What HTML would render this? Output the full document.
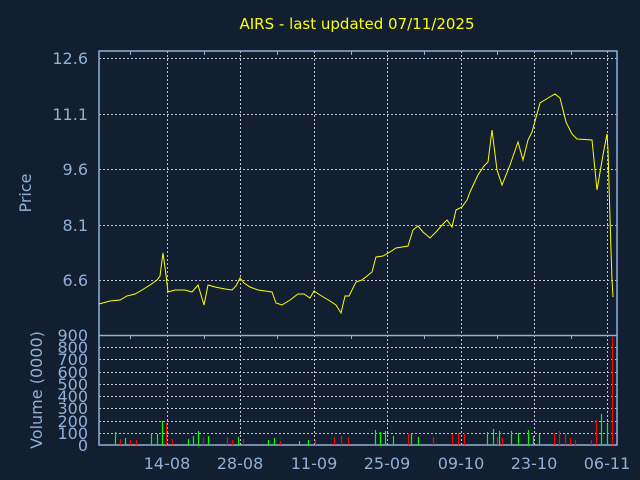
<!DOCTYPE html><html><head><style>html,body{margin:0;background:#111f30;width:640px;height:480px;overflow:hidden}svg{display:block}</style></head><body>
<svg width="640" height="480" xmlns="http://www.w3.org/2000/svg" font-family="DejaVu Sans, Liberation Sans, sans-serif">
<rect width="640" height="480" fill="#111f30"/>
<text x="357" y="29" fill="#ffff00" font-size="15" text-anchor="middle">AIRS - last updated 07/11/2025</text>
<g stroke="#c0c4c8" stroke-dasharray="2,2" stroke-width="1">
<line x1="99" x2="617" y1="58.5" y2="58.5"/><line x1="99" x2="617" y1="114.5" y2="114.5"/><line x1="99" x2="617" y1="169.5" y2="169.5"/><line x1="99" x2="617" y1="225.5" y2="225.5"/><line x1="99" x2="617" y1="280.5" y2="280.5"/>
<line x1="99" x2="617" y1="347.5" y2="347.5"/><line x1="99" x2="617" y1="359.5" y2="359.5"/><line x1="99" x2="617" y1="372.5" y2="372.5"/><line x1="99" x2="617" y1="384.5" y2="384.5"/><line x1="99" x2="617" y1="396.5" y2="396.5"/><line x1="99" x2="617" y1="408.5" y2="408.5"/><line x1="99" x2="617" y1="421.5" y2="421.5"/><line x1="99" x2="617" y1="433.5" y2="433.5"/>
<line x1="167.5" x2="167.5" y1="51" y2="445"/><line x1="240.5" x2="240.5" y1="51" y2="445"/><line x1="314.5" x2="314.5" y1="51" y2="445"/><line x1="387.5" x2="387.5" y1="51" y2="445"/><line x1="461.5" x2="461.5" y1="51" y2="445"/><line x1="534.5" x2="534.5" y1="51" y2="445"/><line x1="607.5" x2="607.5" y1="51" y2="445"/>
</g>
<g stroke="#8fb0d8" fill="none" stroke-width="1.5">
<rect x="99" y="51" width="518" height="394"/>
<line x1="99" x2="617" y1="335.5" y2="335.5"/>
<path stroke-width="1" d="M130.5 51v4M204.5 51v4M277.5 51v4M351.5 51v4M424.5 51v4M497.5 51v4M571.5 51v4M130.5 335v4M204.5 335v4M277.5 335v4M351.5 335v4M424.5 335v4M497.5 335v4M571.5 335v4"/>
</g>
<g fill="#8fb0d8" font-size="16" text-anchor="end">
<text x="88" y="64">12.6</text><text x="88" y="120">11.1</text><text x="88" y="175">9.6</text><text x="88" y="231">8.1</text><text x="88" y="286">6.6</text>
</g>
<g fill="#8fb0d8" font-size="16" text-anchor="end">
<text x="88" y="341">900</text><text x="88" y="353">800</text><text x="88" y="365">700</text><text x="88" y="378">600</text><text x="88" y="390">500</text><text x="88" y="402">400</text><text x="88" y="414">300</text><text x="88" y="427">200</text><text x="88" y="439">100</text><text x="88" y="451">0</text>
</g>
<text transform="translate(31,193) rotate(-90)" fill="#8fb0d8" font-size="16" text-anchor="middle">Price</text>
<text transform="translate(42,390) rotate(-90)" fill="#8fb0d8" font-size="16" text-anchor="middle">Volume (0000)</text>
<g fill="#8fb0d8" font-size="16" text-anchor="middle">
<text x="167" y="469">14-08</text><text x="240" y="469">28-08</text><text x="314" y="469">11-09</text><text x="387" y="469">25-09</text><text x="461" y="469">09-10</text><text x="534" y="469">23-10</text><text x="607" y="469">06-11</text>
</g>
<polyline fill="none" stroke="#ffff00" stroke-width="1" points="99,304 110,301 120,300 127,296 135,294 142,290 150,285 157,280 160,276 163,253 166,275 168,292 175,290 185,290 192,292 198,285 204,305 208,285 215,287 225,289 232,290 236,286 240,278 244,283 250,287 258,290 265,291 272,292 276,303 282,305 290,300 298,294 304,294 310,298 314,291 320,295 330,301 336,305 341,313 345,296 349,296 356,282 362,280 372,272 376,257 383,256 390,252 396,248 408,246 413,230 418,226 423,232 430,238 436,232 443,224 447,220 452,227 456,210 462,207 467,200 470,192 478,175 484,166 488,162 492,130 497,170 502,185 510,165 518,142 523,160 528,140 532,132 540,103 548,98 555,94 560,98 566,122 572,134 577,139 592,140 597,190 603,155 607,134 608,150 609,185 610,218 611,250 612,280 613,297"/>
<g stroke-width="1.2">
<path stroke="#00ff00" d="M115.5 445V432M125.5 445V438M151.5 445V433M157.5 445V434M162.5 445V421M188.5 445V439M193.5 445V436M198.5 445V431M208.5 445V436M238.5 445V437M268.5 445V440M274.5 445V438M299.5 445V441M308.5 445V440M375.5 445V430M380.5 445V432M385.5 445V431M393.5 445V436M411.5 445V434M418.5 445V437M487.5 445V432M493.5 445V429M499.5 445V431M511.5 445V431M518.5 445V433M528.5 445V430M533.5 445V436M539.5 445V434M601.5 445V414M607.5 445V424"/>
<path stroke="#ff0000" d="M120.5 445V439M130.5 445V440M136.5 445V440M166.5 445V423M172.5 445V439M203.5 445V437M227.5 445V437M232.5 445V440M243.5 445V439M280.5 445V441M315.5 445V440M334.5 445V437M341.5 445V436M348.5 445V437M408.5 445V433M433.5 445V437M452.5 445V434M458.5 445V433M464.5 445V433M497.5 445V437M502.5 445V438M554.5 445V434M559.5 445V431M565.5 445V434M570.5 445V438M575.5 445V440M591.5 445V440M596.5 445V420M612.5 445V337"/>
</g>
</svg></body></html>
